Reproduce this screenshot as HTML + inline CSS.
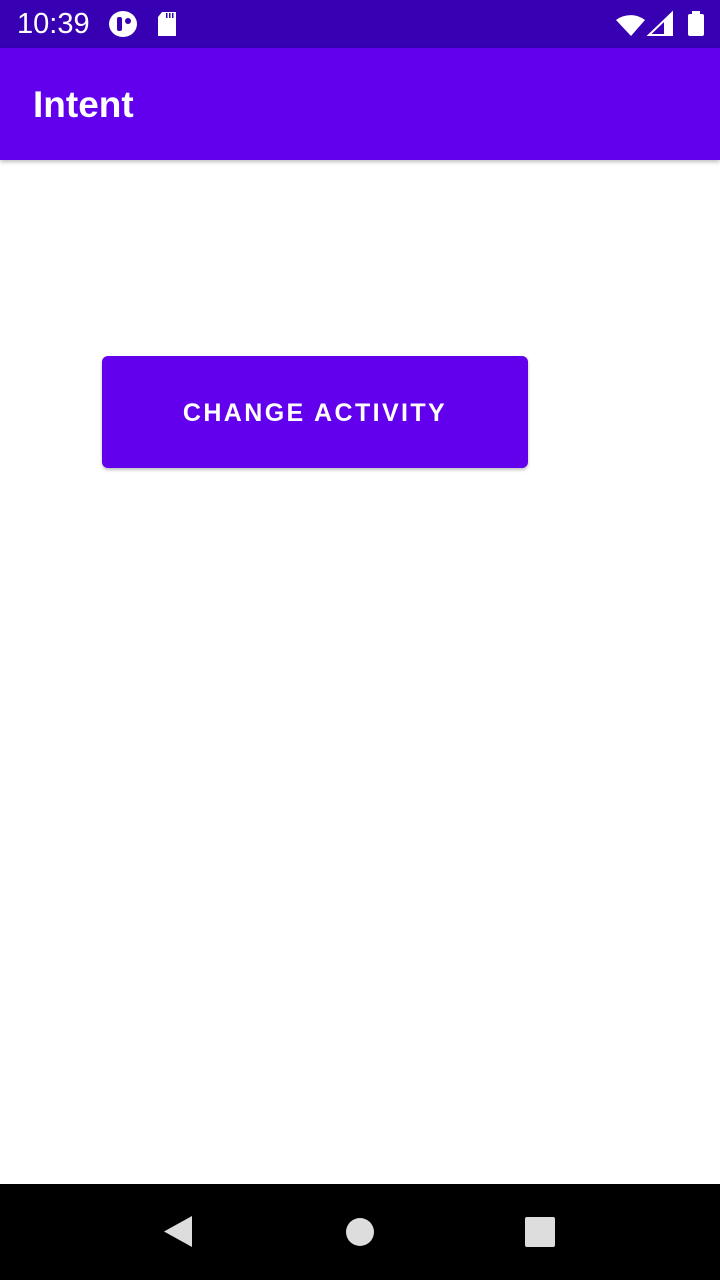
<!DOCTYPE html>
<html><head><style>
body{margin:0;width:720px;height:1280px;position:relative;background:#fff;font-family:"Liberation Sans",sans-serif;overflow:hidden}
.sb{position:absolute;top:0;left:0;width:720px;height:48px;background:#3700b3;color:#fff}
.ab{position:absolute;top:48px;left:0;width:720px;height:112px;background:#6200ee;box-shadow:0 2px 4px rgba(0,0,0,.25)}
.ab span{position:absolute;left:33px;top:36px;font-size:37px;font-weight:bold;color:#fff}
.btn{position:absolute;left:102px;top:356px;width:426px;height:112px;background:#6200ee;border-radius:6px;box-shadow:0 2px 3px rgba(0,0,0,.25);color:#fff;font-size:25px;font-weight:bold;letter-spacing:2.4px;text-align:center;line-height:114px}
.nav{position:absolute;top:1184px;left:0;width:720px;height:96px;background:#000}
</style></head><body>
<div class="sb">
<span style="position:absolute;left:17px;top:8px;font-size:29px">10:39</span>
<svg width="720" height="48" style="position:absolute;left:0;top:0">
<ellipse cx="123" cy="24" rx="14" ry="13" fill="#fff"/><rect x="117" y="17" width="5" height="14" rx="2" fill="#3700b3"/><circle cx="128" cy="21" r="3" fill="#3700b3"/>
<path d="M162 12h14v24h-18v-19z" fill="#fff"/><rect x="166" y="13" width="1.5" height="5" fill="#3700b3"/><rect x="169" y="13" width="1.5" height="5" fill="#3700b3"/><rect x="172" y="13" width="1.5" height="5" fill="#3700b3"/>
<path d="M616 20a24 24 0 0 1 29 0l-14 16z" fill="#fff"/>
<path d="M672 13v22h-23z" fill="none" stroke="#fff" stroke-width="2"/><path d="M672 13v22h-8v-14z" fill="#fff"/>
<rect x="688" y="14" width="16" height="22" rx="2" fill="#fff"/><rect x="692" y="11" width="8" height="4" fill="#fff"/>
</svg></div>
<div class="ab"><span>Intent</span></div>
<div class="btn">CHANGE ACTIVITY</div>
<div class="nav"><svg width="720" height="96">
<path d="M192 1216v31l-28-15.5z" fill="#ddd" transform="translate(0,-1184)"/>
<circle cx="360" cy="48" r="14" fill="#ddd"/>
<rect x="525" y="33" width="30" height="30" rx="2" fill="#ddd"/>
</svg></div>
</body></html>
